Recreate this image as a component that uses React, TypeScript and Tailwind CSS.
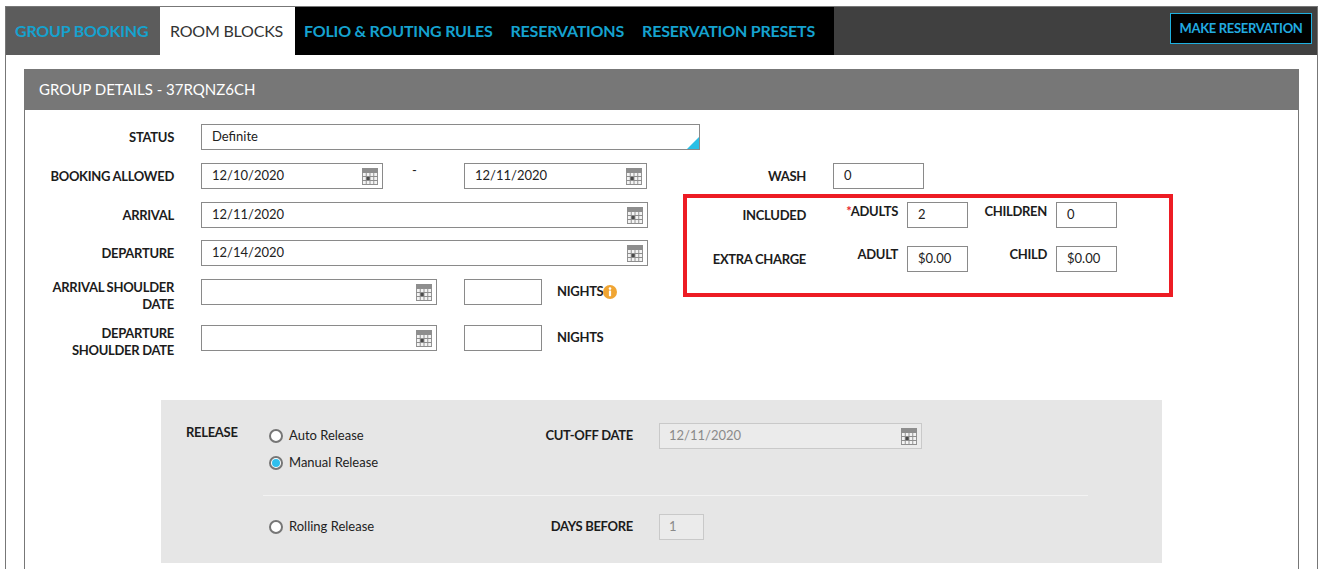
import React from "react";

const Cal = () => (
  <svg width="16" height="17" viewBox="0 0 17 17" preserveAspectRatio="none" className="block">
    <rect width="17" height="17" fill="#8e8e8e" />
    {[0, 1, 2].map((r) =>
      [0, 1, 2, 3].map((c) => (
        <rect
          key={`${r}-${c}`}
          x={1 + c * 4}
          y={5 + r * 4}
          width="3"
          height="3"
          fill={r === 1 && c === 1 ? "#4a4a4a" : "#f3f3f3"}
        />
      ))
    )}
  </svg>
);

const Info = () => (
  <svg width="14" height="14" viewBox="0 0 14 14" className="block">
    <circle cx="7" cy="7" r="7" fill="#f0a533" />
    <circle cx="7" cy="3.6" r="1.3" fill="#fff" />
    <rect x="5.9" y="5.6" width="2.2" height="5.6" rx="0.4" fill="#fff" />
  </svg>
);

const Label = ({ children, w, extra = "" }: { children: React.ReactNode; w: string; extra?: string }) => (
  <div className={`${w} shrink-0 text-right text-[13px] font-bold tracking-[-0.3px] text-[#1c1c1c] leading-[17px] ${extra}`}>
    {children}
  </div>
);

const Input = ({ w, value = "", cal = false }: { w: string; value?: string; cal?: boolean }) => (
  <div className={`${w} h-[26px] shrink-0 border border-[#8a8a8a] bg-white flex items-center justify-between pl-[10px] pr-[4px] text-[13px] text-[#222]`}>
    <span>{value}</span>
    {cal && <Cal />}
  </div>
);

const Disabled = ({ w, value, cal = false }: { w: string; value: string; cal?: boolean }) => (
  <div className={`${w} h-[26px] shrink-0 border border-[#c9c9c9] bg-[#ebebeb] flex items-center justify-between pl-[9px] pr-[4px] text-[13px] text-[#8a8a8a]`}>
    <span>{value}</span>
    {cal && <Cal />}
  </div>
);

const Radio = ({ checked = false, label }: { checked?: boolean; label: string }) => (
  <div className="h-[26px] flex items-center gap-[6px]">
    <span className="w-[14px] h-[14px] rounded-full border-2 border-[#767676] bg-white flex items-center justify-center">
      {checked && <span className="w-[8px] h-[8px] rounded-full bg-[#2dbfee]" />}
    </span>
    <span className="text-[13px] text-[#222]">{label}</span>
  </div>
);

export default function App() {
  return (
    <div className="h-[569px] overflow-hidden bg-white pt-[6px] pl-[5px] font-['Lato','Noto_Sans',sans-serif]">
      <div className="w-[1313px] h-[563px] border-x border-t border-[#777]">
        {/* Nav */}
        <div className="h-[48px] flex">
          <div className="w-[154px] bg-[#5c5c5c] pl-[9px] flex items-center text-[16px] font-bold text-[#15a2cf] tracking-[-0.2px]">
            GROUP BOOKING
          </div>
          <div className="w-[135px] bg-white pl-[10px] flex items-center text-[16px] text-[#333] tracking-[-0.2px]">
            ROOM BLOCKS
          </div>
          <div className="w-[539px] bg-black pl-[9px] flex items-center gap-[18px] text-[16px] font-bold text-[#15a2cf] tracking-[-0.2px]">
            <span>FOLIO &amp; ROUTING RULES</span>
            <span>RESERVATIONS</span>
            <span>RESERVATION PRESETS</span>
          </div>
          <div className="flex-1 bg-[#404040] flex justify-end items-start pt-[6px] pr-[5px]">
            <div className="w-[142px] h-[31px] bg-black border border-[#1fb0e0] flex items-center justify-center text-[13px] font-bold tracking-[-0.3px] text-[#22abe0]">
              MAKE RESERVATION
            </div>
          </div>
        </div>

        {/* Panel */}
        <div className="ml-[18px] mt-[14px] w-[1275px]">
          <div className="h-[41px] bg-[#777] flex items-center pl-[15px] text-[15px] text-white">
            GROUP DETAILS - 37RQNZ6CH
          </div>
          <div className="border-x border-[#777] h-[460px] pt-[14px]">
            {/* Status */}
            <div className="flex items-center">
              <Label w="w-[149px]">STATUS</Label>
              <div className="ml-[27px] relative w-[499px] h-[26px] border border-[#8a8a8a] bg-white flex items-center pl-[10px] text-[13px] text-[#222]">
                Definite
                <span className="absolute right-0 bottom-0 w-0 h-0 border-l-[12px] border-l-transparent border-b-[12px] border-b-[#2bbfe6]" />
              </div>
            </div>

            <div className="flex mt-[13px]">
              {/* Left column */}
              <div className="w-[658px] shrink-0">
                <div className="flex items-center">
                  <Label w="w-[149px]">BOOKING ALLOWED</Label>
                  <div className="ml-[27px]">
                    <Input w="w-[182px]" value="12/10/2020" cal />
                  </div>
                  <div className="w-[81px] self-start pl-[29px] -mt-[2px] text-[13px] text-[#222]">-</div>
                  <Input w="w-[183px]" value="12/11/2020" cal />
                </div>
                <div className="flex items-center mt-[13px]">
                  <Label w="w-[149px]">ARRIVAL</Label>
                  <div className="ml-[27px]">
                    <Input w="w-[447px]" value="12/11/2020" cal />
                  </div>
                </div>
                <div className="flex items-center mt-[12px]">
                  <Label w="w-[149px]">DEPARTURE</Label>
                  <div className="ml-[27px]">
                    <Input w="w-[447px]" value="12/14/2020" cal />
                  </div>
                </div>
                <div className="flex items-start mt-[13px]">
                  <Label w="w-[149px]">
                    ARRIVAL SHOULDER
                    <br />
                    DATE
                  </Label>
                  <div className="ml-[27px] flex items-center">
                    <Input w="w-[236px]" cal />
                    <div className="ml-[27px]">
                      <Input w="w-[78px]" />
                    </div>
                    <span className="ml-[15px] text-[13px] font-bold tracking-[-0.3px] text-[#1c1c1c]">NIGHTS</span>
                    <Info />
                  </div>
                </div>
                <div className="flex items-start mt-[12px]">
                  <Label w="w-[149px]">
                    DEPARTURE
                    <br />
                    SHOULDER DATE
                  </Label>
                  <div className="ml-[27px] flex items-center">
                    <Input w="w-[236px]" cal />
                    <div className="ml-[27px]">
                      <Input w="w-[78px]" />
                    </div>
                    <span className="ml-[15px] text-[13px] font-bold tracking-[-0.3px] text-[#1c1c1c]">NIGHTS</span>
                  </div>
                </div>
              </div>

              {/* Right column */}
              <div>
                <div className="flex items-center">
                  <Label w="w-[123px]">WASH</Label>
                  <div className="ml-[27px]">
                    <Input w="w-[91px]" value="0" />
                  </div>
                </div>
                <div className="mt-[5px] w-[490px] h-[103px] border-4 border-[#ed1c24] pt-[4px]">
                  <div className="flex items-center">
                    <Label w="w-[119px]">INCLUDED</Label>
                    <Label w="w-[92px]" extra="self-start pt-[1px]">
                      <span className="text-[#e8262c]">*</span>ADULTS
                    </Label>
                    <div className="ml-[9px]">
                      <Input w="w-[61px]" value="2" />
                    </div>
                    <Label w="w-[79px]" extra="self-start pt-[1px]">CHILDREN</Label>
                    <div className="ml-[9px]">
                      <Input w="w-[61px]" value="0" />
                    </div>
                  </div>
                  <div className="flex items-center mt-[18px]">
                    <Label w="w-[119px]">EXTRA CHARGE</Label>
                    <Label w="w-[92px]" extra="self-start">ADULT</Label>
                    <div className="ml-[9px]">
                      <Input w="w-[61px]" value="$0.00" />
                    </div>
                    <Label w="w-[79px]" extra="self-start">CHILD</Label>
                    <div className="ml-[9px]">
                      <Input w="w-[61px]" value="$0.00" />
                    </div>
                  </div>
                </div>
              </div>
            </div>

            {/* Release */}
            <div className="ml-[136px] mt-[41px] w-[1001px] bg-[#e6e6e6]">
              <div className="flex pt-[23px] pb-[19px]">
                <div className="w-[108px] shrink-0 pl-[25px] pt-[1px] text-[13px] font-bold tracking-[-0.3px] text-[#1c1c1c] leading-[17px]">
                  RELEASE
                </div>
                <div className="w-[275px] shrink-0 flex flex-col gap-[1px]">
                  <Radio label="Auto Release" />
                  <Radio checked label="Manual Release" />
                </div>
                <div className="w-[115px] shrink-0 h-[26px] flex items-center justify-end pr-[26px] text-[13px] font-bold tracking-[-0.3px] text-[#1c1c1c]">
                  CUT-OFF DATE
                </div>
                <Disabled w="w-[263px]" value="12/11/2020" cal />
              </div>
              <div className="ml-[102px] w-[825px] h-px bg-[#f3f3f3]" />
              <div className="flex pt-[18px] pb-[23px]">
                <div className="w-[108px] shrink-0" />
                <div className="w-[275px] shrink-0">
                  <Radio label="Rolling Release" />
                </div>
                <div className="w-[115px] shrink-0 h-[26px] flex items-center justify-end pr-[26px] text-[13px] font-bold tracking-[-0.3px] text-[#1c1c1c]">
                  DAYS BEFORE
                </div>
                <Disabled w="w-[45px]" value="1" />
              </div>
            </div>
          </div>
        </div>
      </div>
    </div>
  );
}
